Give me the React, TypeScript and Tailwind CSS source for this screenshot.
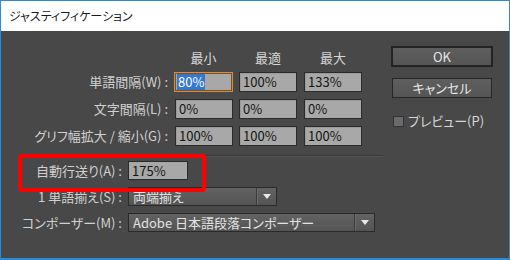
import React from "react";

const font = "font-['Noto_Sans_CJK_JP','Noto_Sans',sans-serif] [font-feature-settings:'palt']";

function Box({ children }: { children: React.ReactNode }) {
  return (
    <div className="h-[20px] w-[58px] bg-[#a8a8a8] border border-[#2b2b2b] text-[13px] leading-[18px] text-[#151515] pl-[3px] shadow-[inset_1px_1px_0_#9a9a9a]">
      {children}
    </div>
  );
}

function Arrow() {
  return (
    <svg width="8" height="5" viewBox="0 0 8 5" className="block">
      <path d="M0 0H8L4 5Z" fill="#e8e8e8" />
    </svg>
  );
}

function Dropdown({ text, wide }: { text: string; wide?: boolean }) {
  return (
    <div
      className={
        wide
          ? "h-[19px] w-[247px] flex border border-[#2a2a2a] bg-gradient-to-b from-[#626262] to-[#545454] text-[13px] leading-[17px] text-[#e2e2e2]"
          : "h-[19px] w-[149px] flex border border-[#2a2a2a] bg-gradient-to-b from-[#626262] to-[#545454] text-[13px] leading-[17px] text-[#e2e2e2]"
      }
    >
      <div className="flex-1 pl-[4px] whitespace-nowrap overflow-hidden">{text}</div>
      <div className="w-[1px] bg-[#3a3a3a]" />
      <div className="w-[1px] bg-[#6c6c6c]" />
      <div className="w-[18px] flex items-center justify-center">
        <Arrow />
      </div>
    </div>
  );
}

export default function App() {
  return (
    <div className={`relative w-[510px] h-[260px] border-x border-t border-b-2 border-[#2d8ad7] flex flex-col ${font}`}>
      <div className="h-[30px] bg-white flex items-center pl-[8px] text-[12px] text-[#1b1b1b]">
        ジャスティフィケーション
      </div>
      <div className="flex-1 bg-[#484848] flex">
        {/* left column */}
        <div className="w-[390px] flex flex-col">
          <div className="pt-[18px] flex h-[36px] text-[13px] leading-[18px] text-[#d6d6d6]">
            <div className="w-[173px]" />
            <div className="w-[59px] text-center">最小</div>
            <div className="w-[6px]" />
            <div className="w-[58px] text-center">最適</div>
            <div className="w-[7px]" />
            <div className="w-[58px] text-center">最大</div>
          </div>
          <div className="mt-[5px] flex flex-col gap-[7px]">
            <div className="flex items-center h-[20px]">
              <div className="w-[173px] pr-[6px] text-right text-[13px] text-[#d0d0d0] whitespace-nowrap">単語間隔(W) :</div>
              <div className="h-[20px] w-[59px] bg-[#a8a8a8] border border-[#de8a2e] shadow-[inset_0_0_0_1px_#6e5436] pl-[2px] flex items-center">
                <span className="block bg-[#3477d3] text-white text-[13px] leading-[16px] px-[1px]">80%</span>
              </div>
              <div className="w-[6px]" />
              <Box>100%</Box>
              <div className="w-[7px]" />
              <Box>133%</Box>
            </div>
            <div className="flex items-center h-[20px]">
              <div className="w-[173px] pr-[6px] text-right text-[13px] text-[#d0d0d0] whitespace-nowrap">文字間隔(L) :</div>
              <div className="w-[1px]" />
              <Box>0%</Box>
              <div className="w-[6px]" />
              <Box>0%</Box>
              <div className="w-[7px]" />
              <Box>0%</Box>
            </div>
            <div className="flex items-center h-[20px]">
              <div className="w-[173px] pr-[6px] text-right text-[13px] text-[#d0d0d0] whitespace-nowrap">グリフ幅拡大 / 縮小(G) :</div>
              <div className="w-[1px]" />
              <Box>100%</Box>
              <div className="w-[6px]" />
              <Box>100%</Box>
              <div className="w-[7px]" />
              <Box>100%</Box>
            </div>
          </div>
          <div className="mt-[9px] ml-[17px] w-[365px] h-[1px] bg-[#383838]" />
          <div className="ml-[17px] w-[365px] h-[1px] bg-[#555555]" />
          <div className="mt-[4px] flex flex-col gap-[7px]">
            <div className="flex items-center h-[19px]">
              <div className="w-[127px] pr-[6px] text-right text-[13px] text-[#d0d0d0] whitespace-nowrap">自動行送り(A) :</div>
              <div className="h-[19px] w-[60px] bg-[#a8a8a8] border border-[#2b2b2b] text-[13px] leading-[17px] text-[#151515] pl-[3px]">175%</div>
            </div>
            <div className="flex items-center h-[19px]">
              <div className="w-[127px] pr-[6px] text-right text-[13px] text-[#d0d0d0] whitespace-nowrap">1 単語揃え(S) :</div>
              <Dropdown text="両端揃え" />
            </div>
            <div className="flex items-center h-[19px]">
              <div className="w-[127px] pr-[6px] text-right text-[13px] text-[#d0d0d0] whitespace-nowrap">コンポーザー(M) :</div>
              <Dropdown text="Adobe 日本語段落コンポーザー" wide />
            </div>
          </div>
        </div>
        {/* right column */}
        <div className="pt-[15px] flex flex-col">
          <div className="h-[21px] w-[102px] border-2 border-[#232323] bg-gradient-to-b from-[#5e5e5e] to-[#555555] text-[13px] leading-[17px] text-center text-[#e6e6e6]">
            OK
          </div>
          <div className="mt-[11px] ml-[1px] h-[20px] w-[100px] border border-[#262626] bg-gradient-to-b from-[#5e5e5e] to-[#555555] text-[13px] leading-[18px] text-center text-[#e6e6e6]">
            キャンセル
          </div>
          <div className="mt-[16px] ml-[2px] flex items-center h-[14px]">
            <div className="w-[11px] h-[11px] bg-[#6a6a6a] border border-[#333333]" />
            <div className="ml-[4px] text-[13px] text-[#d6d6d6] whitespace-nowrap">プレビュー(P)</div>
          </div>
        </div>
      </div>
      <div className="absolute left-[17px] top-[153px] w-[188px] h-[38px] border-4 border-[#ff0000] rounded-[4px]" />
    </div>
  );
}
